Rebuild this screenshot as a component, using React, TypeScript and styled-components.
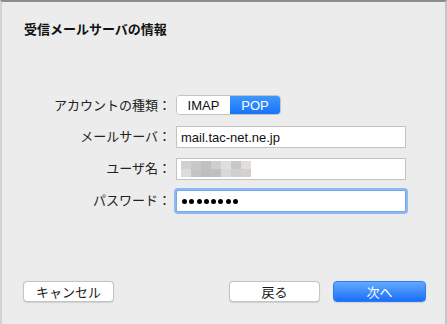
import React from "react";
import styled, { createGlobalStyle } from "styled-components";

const GlobalStyle = createGlobalStyle`
  html, body {
    margin: 0;
    padding: 0;
    background: #ececec;
  }
  body {
    font-family: "Liberation Sans", "Noto Sans CJK JP", sans-serif;
    color: #1e1e1e;
  }
`;

const WINDOW = styled.div`
  position: relative;
  box-sizing: border-box;
  width: 447px;
  height: 324px;
  display: grid;
  grid-template-rows: 58px 1fr 62px;
  background-color: #ececec;
  border-top: 2px solid #8d8d8d;
  border-left: 2px solid #d2d2d2;
  border-right: 2px solid #c6c6c6;
  overflow: hidden;
  &::before {
    content: "";
    position: absolute;
    left: -2px;
    top: 16px;
    width: 2px;
    height: 44px;
    background: #b8c4d2;
  }
`;
WINDOW.displayName = "WINDOW";

const TITLE = styled.div`
  padding: 19px 0 0 22px;
  font-size: 13px;
  font-weight: 700;
  line-height: 18px;
  color: #111;
`;
TITLE.displayName = "TITLE";

const FORM = styled.div`
  display: grid;
  grid-template-columns: 150px 230px;
  grid-auto-rows: min-content;
  column-gap: 5px;
  row-gap: 10px;
  padding: 35px 0 0 19px;
  align-items: center;
`;
FORM.displayName = "FORM";

const LABEL = styled.div`
  text-align: right;
  font-size: 13px;
  line-height: 20px;
  color: #222;
  white-space: nowrap;
`;
LABEL.displayName = "LABEL";

const SEGMENTS = styled.div`
  display: inline-flex;
  width: max-content;
  height: 20px;
  box-sizing: border-box;
  border: 1px solid #c4c4c4;
  border-radius: 4px;
  overflow: hidden;
  background: #fff;
  margin-bottom: 1px;
`;
SEGMENTS.displayName = "SEGMENTS";

interface ISegment {
  selected?: boolean;
  w: number;
}

const SEGMENT = styled.span<ISegment>`
  display: flex;
  align-items: center;
  justify-content: center;
  width: ${p => p.w}px;
  font-size: 13px;
  color: ${p => (p.selected ? "#fff" : "#111")};
  background: ${p => (p.selected ? "linear-gradient(#3f97fd, #1675f8)" : "#fff")};
`;
SEGMENT.displayName = "SEGMENT";

interface IField {
  focused?: boolean;
}

const FIELD = styled.div<IField>`
  box-sizing: border-box;
  height: 22px;
  width: 230px;
  display: flex;
  align-items: center;
  padding: 0 4px;
  background: #fff;
  border: 1px solid ${p => (p.focused ? "#7aa7e6" : "#c2c2c2")};
  box-shadow: ${p => (p.focused ? "0 0 0 2px #8ab9f3" : "none")};
  border-radius: ${p => (p.focused ? "2px" : "0")};
  font-size: 13px;
  color: #111;
`;
FIELD.displayName = "FIELD";

const DOTS = styled.div`
  display: flex;
  gap: 2.3px;
  padding-left: 1px;
  span {
    width: 5px;
    height: 5px;
    border-radius: 50%;
    background: #000;
  }
`;
DOTS.displayName = "DOTS";

const MOSAIC = styled.div`
  display: grid;
  grid-template-columns: repeat(7, 10px);
  grid-template-rows: 8px 8px;
  margin-left: 0;
`;
MOSAIC.displayName = "MOSAIC";

const CELL = styled.span<{ c: string }>`
  background: ${p => p.c};
`;
CELL.displayName = "CELL";

const FOOTER = styled.div`
  display: flex;
  align-items: flex-start;
  padding: 19px 19px 0 21px;
`;
FOOTER.displayName = "FOOTER";

const SPACER = styled.div`
  flex: 1;
`;

interface IButton {
  primary?: boolean;
}

const BUTTON = styled.div<IButton>`
  box-sizing: border-box;
  width: ${p => (p.primary ? 93 : 91)}px;
  height: 21px;
  margin-left: ${p => (p.primary ? 13 : 0)}px;
  display: flex;
  align-items: center;
  justify-content: center;
  border-radius: 4px;
  font-size: 13px;
  color: ${p => (p.primary ? "#fff" : "#1a1a1a")};
  background: ${p => (p.primary ? "linear-gradient(#62aafd, #1a6ff8)" : "#fff")};
  border: 1px solid ${p => (p.primary ? "#2a7df6" : "#c4c4c4")};
  box-shadow: 0 0.5px 1px rgba(0, 0, 0, 0.12);
`;
BUTTON.displayName = "BUTTON";

const mosaic = [
  "#d0d0d0", "#c8c8c8", "#c1c1c1", "#cfcfcf", "#dedede", "#c8c8c8", "#e1dfdc",
  "#dcdcdc", "#c4c4c4", "#bebebe", "#c0c0c0", "#d8d8d8", "#cfcfcf", "#d4d0cb",
];

export default function App() {
  return (
    <>
      <GlobalStyle />
      <WINDOW>
        <TITLE>受信メールサーバの情報</TITLE>
        <FORM>
          <LABEL>アカウントの種類：</LABEL>
          <SEGMENTS>
            <SEGMENT w={53}>IMAP</SEGMENT>
            <SEGMENT w={50} selected>POP</SEGMENT>
          </SEGMENTS>

          <LABEL>メールサーバ：</LABEL>
          <FIELD>mail.tac-net.ne.jp</FIELD>

          <LABEL>ユーザ名：</LABEL>
          <FIELD>
            <MOSAIC>
              {mosaic.map((c, i) => (
                <CELL key={i} c={c} />
              ))}
            </MOSAIC>
          </FIELD>

          <LABEL>パスワード：</LABEL>
          <FIELD focused>
            <DOTS>
              {Array.from({ length: 8 }).map((_, i) => (
                <span key={i} />
              ))}
            </DOTS>
          </FIELD>
        </FORM>
        <FOOTER>
          <BUTTON>キャンセル</BUTTON>
          <SPACER />
          <BUTTON>戻る</BUTTON>
          <BUTTON primary>次へ</BUTTON>
        </FOOTER>
      </WINDOW>
    </>
  );
}
